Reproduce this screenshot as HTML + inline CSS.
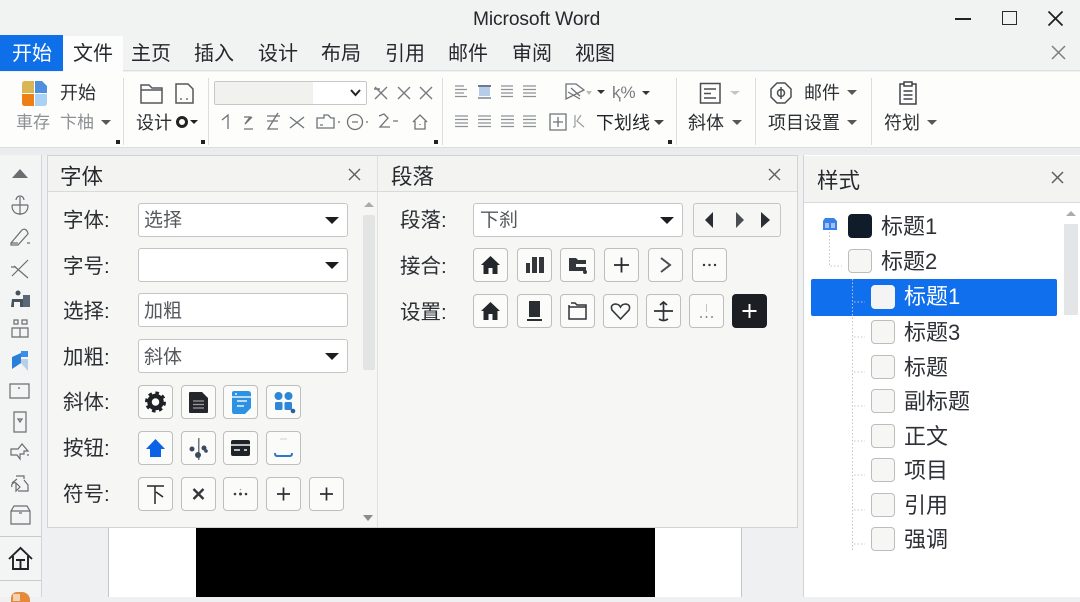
<!DOCTYPE html>
<html lang="zh"><head><meta charset="utf-8"><title>Microsoft Word</title>
<style>
html,body{margin:0;padding:0}
body{width:1080px;height:597px;overflow:hidden;position:relative;background:#eef0f2;font-family:"Liberation Sans","Noto Sans CJK SC",sans-serif;color:#24282c}
div,span,svg{position:absolute;box-sizing:border-box}
.t{white-space:nowrap;line-height:30px;height:30px;font-size:20px}
.r{font-size:18px;color:#2c2f33;margin-top:1px}
.g{font-size:17px;color:#8d9195;margin-top:1px}
.l{font-size:20.5px;color:#2b2e33;margin-top:2px}
.f{font-size:19px;color:#55585c;margin-top:2px}
.h{font-size:21.5px;color:#26292d}
.s{font-size:22px;color:#2d3035;line-height:34px;height:34px;margin-top:1px}
.sep{width:1px;top:78px;height:67px;background:#dcdddd}
.dot{width:4px;height:4px;background:#222;top:140px}
.fld{background:#fff;border:1px solid #c4c5c5;border-radius:3px;left:138px;width:210px;height:34px}
.btn{background:#fbfbfa;border:1px solid #bdbebe;border-radius:4px;width:35px;height:34px}
.btn svg{left:0;top:0;width:33px;height:32px}
.tri{width:0;height:0;border-left:7.5px solid transparent;border-right:7.5px solid transparent;border-top:7px solid #1b1d20}
.sm{width:0;height:0;border-left:4px solid transparent;border-right:4px solid transparent;border-top:4px solid #55585c}
.cb{width:24px;height:24px;border:1px solid #bdbdbd;border-radius:4px;background:#f6f6f5}
.ln{stroke:#8e9296;stroke-width:1.3;fill:none}
.ic{stroke:#6f7377;stroke-width:1.3;fill:none}
.ri{stroke:#6a6e72;stroke-width:1.2;fill:none;left:8px;width:24px;height:24px}
</style></head><body>

<!-- title + tabs -->
<div style="left:0;top:0;width:1080px;height:71px;background:#f1f2f2;border-bottom:1px solid #dedfe0"></div>
<div class="t" style="left:473px;top:5px;font-size:19.2px;color:#25282b;letter-spacing:-.1px">Microsoft Word</div>
<div style="left:955px;top:18px;width:16px;height:2px;background:#222"></div>
<div style="left:1002px;top:11px;width:15px;height:14px;border:1.6px solid #2a2a2a"></div>
<svg style="left:1047px;top:10px" width="17" height="17"><path d="M1.5 1.5L15.5 15.5M15.5 1.5L1.5 15.5" stroke="#1d1d1d" stroke-width="1.7"/></svg>
<div style="left:0;top:35px;width:63px;height:36px;background:#0f6fe8"></div>
<div style="left:63px;top:36px;width:60px;height:37px;background:#fdfdfd"></div>
<div class="t" style="left:12px;top:39px;color:#fff">开始</div>
<div class="t" style="left:73px;top:39px">文件</div>
<div class="t" style="left:131px;top:39px">主页</div>
<div class="t" style="left:194px;top:39px">插入</div>
<div class="t" style="left:258px;top:39px">设计</div>
<div class="t" style="left:321px;top:39px">布局</div>
<div class="t" style="left:385px;top:39px">引用</div>
<div class="t" style="left:448px;top:39px">邮件</div>
<div class="t" style="left:512px;top:39px">审阅</div>
<div class="t" style="left:575px;top:39px">视图</div>
<svg style="left:1051px;top:45px" width="15" height="15"><path d="M1 1L14 14M14 1L1 14" stroke="#7b7e81" stroke-width="1.5"/></svg>

<!-- ribbon -->
<div style="left:0;top:72px;width:1080px;height:76px;background:#fdfdfc;border-bottom:1px solid #dcdddd"></div>
<div style="left:0;top:148px;width:1080px;height:7px;background:#ebecee"></div>
<div class="sep" style="left:123px"></div><div class="sep" style="left:208px"></div><div class="sep" style="left:442px"></div><div class="sep" style="left:676px"></div><div class="sep" style="left:755px"></div><div class="sep" style="left:871px"></div>
<div class="dot" style="left:116px"></div><div class="dot" style="left:201px"></div><div class="dot" style="left:434px"></div><div class="dot" style="left:668px"></div>

<svg style="left:22px;top:81px" width="25" height="25"><path d="M3 0H12V12H0V3Q0 0 3 0Z" fill="#d9b553"/><path d="M13 0H20L25 5V12H13Z" fill="#4f8fe0"/><path d="M0 13H12V25H3Q0 25 0 22Z" fill="#ee7f17"/><path d="M13 13H25V22Q25 25 22 25H13Z" fill="#a9d0f5"/></svg>
<div class="t r" style="left:60px;top:77px">开始</div>
<div class="t g" style="left:16px;top:107px">車存</div>
<div class="t g" style="left:60px;top:107px">卞柚</div>
<div class="sm" style="left:101px;top:120px;border-left-width:5px;border-right-width:5px;border-top-width:5px"></div>

<svg style="left:139px;top:82px" width="56" height="23" fill="none" stroke="#55585c" stroke-width="1.5"><path d="M2 21V3H10L13 6H23V21Z M2 8H23"/><path d="M37 2H49L54 7V21H37Z"/><path d="M41 17H43M47 17H49" stroke-width="1.2"/></svg>
<div class="t r" style="left:136px;top:107px">设计</div>
<div style="left:176px;top:116px;width:12px;height:12px;border:3px solid #222;border-radius:50%"></div>
<div class="sm" style="left:190px;top:120px;border-top-color:#222"></div>

<div style="left:214px;top:81px;width:153px;height:24px;background:#fff;border:1px solid #c6c7c7;border-radius:2px"></div>
<div style="left:215px;top:82px;width:98px;height:22px;background:#f1f1ee"></div>
<svg style="left:349px;top:88px" width="13" height="10"><path d="M2 2L6.5 7L11 2" stroke="#222" stroke-width="2" fill="none"/></svg>
<svg style="left:372px;top:84px" width="62" height="18" fill="none" stroke="#777b7f" stroke-width="1.4"><path d="M3 3L15 15M15 3L3 15M2 5H8"/><path d="M26 3L38 15M38 3L26 15"/><path d="M48 3L60 15M60 3L48 15"/></svg>
<svg style="left:218px;top:110px" width="216" height="24" class="ic"><path d="M4 10L10 5V19"/><path d="M26 7H32L27 14L34 7M26 19H35"/><path d="M49 6H62M60 3L50 19H60M49 11H60" /><path d="M72 7L86 18M86 7L72 18"/><path d="M99 8H106V5L110 5L113 8H116V18H99Z M102 15H105"/><path d="M120 12H122"/><circle cx="137" cy="12" r="7.5"/><path d="M134 12H140M148 12H150"/><path d="M161 6L166 4L170 8L162 17H172M175 11H180"/><path d="M195 12L202 5L209 12M197 11V19H207V11"/><path d="M202 14V15"/></svg>

<!-- align -->
<svg style="left:455px;top:85px" width="84" height="46" class="ln"><path d="M0 1H9M0 4.5H12M0 8H9M0 11.5H12"/><path d="M46 1H58M46 4.5H58M46 8H58M46 11.5H58"/><path d="M68 1H81M68 4.5H81M68 8H81M68 11.5H81"/><path d="M0 31H13M0 34.5H13M0 38H13M0 41.5H13"/><path d="M23 31H36M23 34.5H36M23 38H36M23 41.5H36"/><path d="M46 31H59M46 34.5H59M46 38H59M46 41.5H59"/><path d="M68 31H81M68 34.5H81M68 38H81M68 41.5H81"/></svg>
<div style="left:479px;top:87px;width:11px;height:9px;background:#b5cde8"></div>
<div style="left:478px;top:85px;width:13px;height:1.5px;background:#6d7a87"></div>
<div style="left:478px;top:97px;width:13px;height:1.5px;background:#9aa4ae"></div>
<svg style="left:564px;top:82px" width="22" height="20" class="ic"><path d="M2 2V17L20 8L12 2Z M4 10L16 17M7 6L16 14"/></svg>
<div class="sm" style="left:586px;top:91px;border-top-color:#bbb;border-left-width:3px;border-right-width:3px"></div>
<div class="sm" style="left:597px;top:90px;border-top-color:#333"></div>
<div class="t" style="left:612px;top:78px;font-size:17px;color:#777b7f">ⱪ%</div>
<div class="sm" style="left:642px;top:91px;border-top-color:#333"></div>
<svg style="left:549px;top:112px" width="42" height="20" class="ic"><path d="M1 2H17V18H1ZM9 5V15M4 10H14"/><path d="M26 3V15M32 3L28 9L35 15M26 15H24" stroke="#a0a3a6"/></svg>
<div class="t r" style="left:596px;top:107px;color:#1f2226">下划线</div>
<div class="sm" style="left:654px;top:120px;border-left-width:5px;border-right-width:5px;border-top-width:5px;border-top-color:#444"></div>

<svg style="left:699px;top:82px" width="24" height="23" fill="none" stroke="#4a4d51" stroke-width="1.5"><path d="M1.5 1.5H21V21H1.5ZM5 7H17M5 11.5H12M5 16H17"/></svg>
<div class="sm" style="left:730px;top:91px;border-top-color:#c4c5c6;border-left-width:5px;border-right-width:5px"></div>
<div class="t r" style="left:688px;top:107px">斜体</div>
<div class="sm" style="left:732px;top:120px;border-left-width:5px;border-right-width:5px;border-top-width:5px"></div>

<svg style="left:769px;top:81px" width="24" height="24" fill="none" stroke="#4b4e52" stroke-width="1.5"><path d="M8 2H16L22 8V16L16 22H8L2 16V8Z" stroke-linejoin="round"/><circle cx="12" cy="12" r="3.5"/><path d="M12 6V18"/></svg>
<div class="t r" style="left:804px;top:77px">邮件</div>
<div class="sm" style="left:847px;top:90px;border-left-width:5px;border-right-width:5px;border-top-width:5px"></div>
<div class="t r" style="left:768px;top:107px">项目设置</div>
<div class="sm" style="left:847px;top:120px;border-left-width:5px;border-right-width:5px;border-top-width:5px"></div>

<svg style="left:897px;top:81px" width="22" height="25" fill="none" stroke="#3f4246" stroke-width="1.5"><path d="M7 3H3V23H19V3H15M7 1H15V5H7ZM6.5 10H15.5M6.5 14H15.5M6.5 18H15.5"/></svg>
<div class="t r" style="left:884px;top:107px">符划</div>
<div class="sm" style="left:927px;top:120px;border-left-width:5px;border-right-width:5px;border-top-width:5px"></div>

<!-- left rail -->
<div style="left:0;top:155px;width:42px;height:442px;background:#f3f4f4;border-right:1px solid #d3d4d5"></div>
<div style="left:12px;top:169px;width:0;height:0;border-left:8.5px solid transparent;border-right:8.5px solid transparent;border-bottom:9px solid #6a6d70"></div>
<svg class="ri" style="top:194px"><path d="M12 3V21M4 11C4 18 8 20 12 20S20 18 20 11M4 11H20M8 6A4 4 0 0 1 16 6"/></svg>
<svg class="ri" style="top:225px"><path d="M3 18L14 5Q17 3 19 6T19 10L10 20H3ZM3 18H10M22 18H19"/></svg>
<svg class="ri" style="top:256px"><path d="M4 20L20 4M6 10L20 22M3 11H8"/></svg>
<svg class="ri" style="top:287px;fill:#47525f;stroke:none"><circle cx="10" cy="6" r="2.5"/><path d="M4 12H15V20H12V15H6V20H3Z"/><path d="M15 8H22V20H15Z" fill="#5a6876"/></svg>
<svg class="ri" style="top:317px"><path d="M6 3H10V7H6ZM14 3H19V7H14ZM4 11H12V20H4ZM12 11H20V20H12Z"/></svg>
<svg class="ri" style="top:349px;stroke:none"><path d="M4 8L13 4V14L4 20Z" fill="#2a80d8"/><path d="M13 2H20V8H13Z" fill="#3b8ee8"/><path d="M13 10H20V22L13 14Z" fill="#b7cfe8"/></svg>
<svg class="ri" style="top:380px"><path d="M2 4H21V18H2ZM10 8H12"/></svg>
<svg class="ri" style="top:410px"><path d="M6 2H18V22H6ZM10 9H14L12 12Z"/></svg>
<svg class="ri" style="top:441px"><path d="M3 8H10L14 3L20 10H16V13L12 13V18L9 14H3ZM19 14H21"/></svg>
<svg class="ri" style="top:473px"><path d="M8 3H16V6M16 7L20 12V18H10M4 10L9 6M4 14A3 3 0 0 1 8 10M8 10L12 14L8 18Z"/></svg>
<svg class="ri" style="top:503px"><path d="M3 8L6 3H19L22 8V21H3ZM3 8H22M11 10H14"/></svg>
<div style="left:0;top:536px;width:41px;height:1px;background:#c9cacb"></div>
<svg style="left:8px;top:546px" width="25" height="25" fill="none" stroke="#1f2225" stroke-width="1.9"><path d="M1 13L12.5 2L24 13M5 10V23H20V10M8 14H17M12.5 14V23"/></svg>
<div style="left:0;top:580px;width:41px;height:1px;background:#c9cacb"></div>
<div style="left:11px;top:592px;width:19px;height:10px;border-radius:6px 8px 0 0;background:#e58a3a"></div>
<div style="left:13px;top:594px;width:7px;height:7px;background:#f2d2b2"></div>

<!-- page -->
<div style="left:108px;top:527px;width:634px;height:70px;background:#fff;border-left:1px solid #c5c6c7;border-right:1px solid #c5c6c7"></div>
<div style="left:196px;top:528px;width:459px;height:69px;background:#000"></div>

<!-- font/para panels -->
<div style="left:47px;top:155px;width:751px;height:373px;background:#f6f6f4;border:1px solid #d2d3d3"></div>
<div style="left:48px;top:156px;width:749px;height:36px;background:#f3f3f2;border-bottom:1px solid #d9dada"></div>
<div style="left:377px;top:156px;width:1px;height:371px;background:#dfe0e0"></div>
<div class="t h" style="left:60px;top:162px">字体</div>
<div class="t h" style="left:391px;top:162px">段落</div>
<svg style="left:348px;top:168px" width="13" height="13"><path d="M1 1L12 12M12 1L1 12" stroke="#5c5f62" stroke-width="1.4"/></svg>
<svg style="left:768px;top:168px" width="13" height="13"><path d="M1 1L12 12M12 1L1 12" stroke="#5c5f62" stroke-width="1.4"/></svg>

<div class="t l" style="left:63px;top:204px">字体:</div>
<div class="t l" style="left:63px;top:250px">字号:</div>
<div class="t l" style="left:63px;top:295px">选择:</div>
<div class="t l" style="left:63px;top:341px">加粗:</div>
<div class="t l" style="left:63px;top:386px">斜体:</div>
<div class="t l" style="left:63px;top:432px">按钮:</div>
<div class="t l" style="left:63px;top:478px">符号:</div>

<div class="fld" style="top:203px"></div><div class="t f" style="left:144px;top:204px">选择</div><div class="tri" style="left:325px;top:217px"></div>
<div class="fld" style="top:248px"></div><div class="tri" style="left:325px;top:262px"></div>
<div class="fld" style="top:293px"></div><div class="t f" style="left:144px;top:295px">加粗</div>
<div class="fld" style="top:339px"></div><div class="t f" style="left:144px;top:341px">斜体</div><div class="tri" style="left:325px;top:353px"></div>

<div style="left:363px;top:215px;width:12px;height:155px;background:#e3e4e4;border-radius:2px"></div>
<div style="left:364px;top:202px;width:0;height:0;border-left:5px solid transparent;border-right:5px solid transparent;border-bottom:5px solid #a9abad"></div>
<div style="left:363px;top:515px;width:0;height:0;border-left:5px solid transparent;border-right:5px solid transparent;border-top:6px solid #8b8d90"></div>

<!-- font buttons -->
<div class="btn" style="left:138px;top:385px"><svg viewBox="0 0 33 32"><circle cx="16.5" cy="16" r="6" fill="none" stroke="#1d2024" stroke-width="4.5"/><circle cx="16.5" cy="16" r="9" fill="none" stroke="#1d2024" stroke-width="3" stroke-dasharray="3.5 3.5"/></svg></div>
<div class="btn" style="left:181px;top:385px"><svg viewBox="0 0 33 32"><path d="M8 6H20L26 12V26Q26 27 25 27H8Q7 27 7 26V7Q7 6 8 6Z" fill="#23262b"/><path d="M11 15H22M11 18.500H22M11 22H22" stroke="#9a9da1" stroke-width="1.2"/></svg></div>
<div class="btn" style="left:223px;top:385px"><svg viewBox="0 0 33 32"><path d="M10 5H24Q27 5 27 8V22L21 28H10Q8 28 8 25V7Q8 5 10 5Z" fill="#2d92e4"/><path d="M8 11H27M13 15H23M13 20H20M11 8H13" stroke="#eaf4fc" stroke-width="1.5"/></svg></div>
<div class="btn" style="left:266px;top:385px"><svg viewBox="0 0 33 32" fill="#2d87d6"><circle cx="11.500" cy="10" r="4"/><circle cx="21.500" cy="10" r="4"/><rect x="8" y="16" width="7.500" height="8" rx="1.500"/><rect x="17.500" y="16" width="7.500" height="8" rx="1.500"/><circle cx="26" cy="25" r="2.300" fill="#28619d"/></svg></div>

<div class="btn" style="left:138px;top:431px"><svg viewBox="0 0 33 32"><path d="M16.500 7L26 17H22V25H11V17H7Z" fill="#0a63e6"/></svg></div>
<div class="btn" style="left:181px;top:431px"><svg viewBox="0 0 33 32" fill="#3b4a5e"><rect x="16" y="6" width="1.500" height="22" fill="#70757c"/><circle cx="10" cy="17" r="2.500"/><circle cx="22" cy="16" r="2.500"/><circle cx="16" cy="23" r="3"/><circle cx="24" cy="19" r="1.800"/></svg></div>
<div class="btn" style="left:223px;top:431px"><svg viewBox="0 0 33 32"><rect x="7" y="8" width="19" height="16" rx="2" fill="#1f2226"/><path d="M7 13H26M10 18H16M20 18H23" stroke="#f2f2f2" stroke-width="1.500"/></svg></div>
<div class="btn" style="left:266px;top:431px"><svg viewBox="0 0 33 32" fill="none"><path d="M13 7H20" stroke="#cfcfcf"/><path d="M8 21Q8 24 10 24H23Q25 24 25 21" stroke="#2f78c6" stroke-width="2"/></svg></div>

<div class="btn" style="left:138px;top:477px"><svg viewBox="0 0 33 32" fill="none" stroke="#24272b" stroke-width="1.500"><path d="M8 8H25M16 8V26M17 14L24 19"/></svg></div>
<div class="btn" style="left:181px;top:477px"><svg viewBox="0 0 33 32"><path d="M11.500 11L21.500 21M21.500 11L11.500 21" stroke="#33363a" stroke-width="2.400"/></svg></div>
<div class="btn" style="left:223px;top:477px"><svg viewBox="0 0 33 32" fill="#3a3d41"><circle cx="11" cy="16" r="1.300"/><circle cx="16.500" cy="16" r="1.500"/><circle cx="22" cy="16" r="1.300"/><circle cx="16.500" cy="11.500" r=".8" fill="#999"/></svg></div>
<div class="btn" style="left:266px;top:477px"><svg viewBox="0 0 33 32"><path d="M10 16H23M16.500 9.500V22.500" stroke="#2c2f33" stroke-width="1.700"/></svg></div>
<div class="btn" style="left:309px;top:477px"><svg viewBox="0 0 33 32"><path d="M10 16H23M16.500 9.500V22.500" stroke="#2c2f33" stroke-width="1.700"/></svg></div>

<!-- para -->
<div class="t l" style="left:400px;top:204px">段落:</div>
<div class="t l" style="left:400px;top:250px">接合:</div>
<div class="t l" style="left:400px;top:296px">设置:</div>
<div class="fld" style="left:473px;top:203px;width:210px"></div><div class="t f" style="left:480px;top:204px">下刹</div><div class="tri" style="left:660px;top:217px"></div>
<div class="fld" style="left:693px;top:203px;width:88px;background:#f6f6f5"></div>
<svg style="left:702px;top:210px" width="72" height="20"><path d="M11 2V18L3 10Z" fill="#2a2d31"/><path d="M34 2V18L42 10Z" fill="#4a4d51"/><path d="M59 2V18L68 10Z" fill="#2a2d31"/></svg>

<div class="btn" style="left:473px;top:248px"><svg viewBox="0 0 33 32"><path d="M16.500 7L26 16H23.500V25H18.500V19H14.500V25H9.500V16H7Z" fill="#23262b"/></svg></div>
<div class="btn" style="left:517px;top:248px"><svg viewBox="0 0 33 32" fill="#33363b"><rect x="8" y="14" width="4" height="10"/><rect x="14" y="8" width="5" height="16"/><rect x="21" y="8" width="5" height="16"/></svg></div>
<div class="btn" style="left:560px;top:248px"><svg viewBox="0 0 33 32" fill="#33363b"><path d="M8 9H15L17 11H25V15H15V18H25V22H8Z"/><circle cx="24" cy="23" r="2"/></svg></div>
<div class="btn" style="left:604px;top:248px"><svg viewBox="0 0 33 32"><path d="M9 16H24M16.500 8.500V23.500" stroke="#26292d" stroke-width="1.800"/></svg></div>
<div class="btn" style="left:648px;top:248px"><svg viewBox="0 0 33 32" fill="none"><path d="M12 9L21 16L12 23" stroke="#4b4e52" stroke-width="2"/></svg></div>
<div class="btn" style="left:692px;top:248px"><svg viewBox="0 0 33 32" fill="#33363a"><circle cx="11" cy="16" r="1.200"/><circle cx="16.500" cy="16" r="1.200"/><circle cx="22" cy="16" r="1.200"/></svg></div>

<div class="btn" style="left:473px;top:294px"><svg viewBox="0 0 33 32"><path d="M16.500 7L26 16H23.500V25H18.500V19H14.500V25H9.500V16H7Z" fill="#23262b"/></svg></div>
<div class="btn" style="left:517px;top:294px"><svg viewBox="0 0 33 32"><path d="M11 6H22V22H11Z" fill="#2a2d31"/><path d="M9 25H24" stroke="#2a2d31" stroke-width="2"/></svg></div>
<div class="btn" style="left:560px;top:294px"><svg viewBox="0 0 33 32" fill="none" stroke="#2f3236" stroke-width="1.500"><path d="M8 10V24H25V10H16L14 8H10M8 12H25"/></svg></div>
<div class="btn" style="left:603px;top:294px"><svg viewBox="0 0 33 32" fill="none" stroke="#33363a" stroke-width="1.600"><path d="M16.500 24L8 15Q6 10 11 9Q15 9 16.500 12Q18 9 22 9Q27 10 25 15Z"/></svg></div>
<div class="btn" style="left:646px;top:294px"><svg viewBox="0 0 33 32" fill="none" stroke="#2f3236" stroke-width="1.700"><path d="M16.500 7V25M7 16H26M13 10L16.500 7L20 10M12 24Q16.500 27 21 24"/></svg></div>
<div class="btn" style="left:689px;top:294px"><svg viewBox="0 0 33 32"><path d="M16.500 9V17" stroke="#c3c4c5"/><circle cx="11" cy="22" r=".9" fill="#666"/><circle cx="16.500" cy="22" r=".9" fill="#666"/><circle cx="22" cy="22" r=".9" fill="#666"/></svg></div>
<div class="btn" style="left:732px;top:294px;background:#1b1e22;border-color:#1b1e22"><svg viewBox="0 0 33 32"><path d="M9.500 16H23.500M16.500 9V23" stroke="#fff" stroke-width="1.900"/></svg></div>

<!-- styles panel -->
<div style="left:803px;top:155px;width:277px;height:442px;background:#fff;border-left:1px solid #d2d3d4"></div>
<div style="left:804px;top:156px;width:276px;height:47px;background:#f3f3f2;border-bottom:1px solid #d9dada"></div>
<div class="t h" style="left:817px;top:166px">样式</div>
<svg style="left:1051px;top:171px" width="13" height="13"><path d="M1 1L12 12M12 1L1 12" stroke="#5c5f62" stroke-width="1.500"/></svg>
<div style="left:1064px;top:224px;width:14px;height:91px;background:#e3e5e7"></div>
<div style="left:1066px;top:211px;width:0;height:0;border-left:5px solid transparent;border-right:5px solid transparent;border-bottom:5px solid #a9abad"></div>
<div style="left:811px;top:279px;width:246px;height:37px;background:#0f6fec;border-radius:2px"></div>
<svg style="left:820px;top:215px" width="50" height="340" fill="none" stroke="#c3c4c5" stroke-dasharray="1.500 2"><path d="M9.500 17V51H22"/><path d="M32.500 64V335M34 87H45M34 122H45M34 157H45M34 191H45M34 226H45M34 260H45M34 295H45M34 329H45"/></svg>
<svg style="left:822px;top:216px" width="16" height="16"><path d="M3 2H12L15 5V14H1V5Z" fill="#3b80e6"/><path d="M3 7H7V12H3ZM9 7H13V12H9Z" fill="#9dc2f3"/></svg>
<div class="cb" style="left:848px;top:214px;background:#111c2b;border-color:#111c2b"></div>
<div class="t s" style="left:881px;top:209px">标题1</div>
<div class="cb" style="left:848px;top:249px"></div>
<div class="t s" style="left:881px;top:244px">标题2</div>
<div class="cb" style="left:871px;top:285px;background:#f4f4f4;border-color:#f4f4f4"></div>
<div class="t s" style="left:904px;top:279px;color:#fff">标题1</div>
<div class="cb" style="left:871px;top:320px"></div><div class="t s" style="left:904px;top:315px">标题3</div>
<div class="cb" style="left:871px;top:355px"></div><div class="t s" style="left:904px;top:350px">标题</div>
<div class="cb" style="left:871px;top:389px"></div><div class="t s" style="left:904px;top:384px">副标题</div>
<div class="cb" style="left:871px;top:424px"></div><div class="t s" style="left:904px;top:419px">正文</div>
<div class="cb" style="left:871px;top:458px"></div><div class="t s" style="left:904px;top:453px">项目</div>
<div class="cb" style="left:871px;top:493px"></div><div class="t s" style="left:904px;top:488px">引用</div>
<div class="cb" style="left:871px;top:527px"></div><div class="t s" style="left:904px;top:522px">强调</div>
</body></html>
